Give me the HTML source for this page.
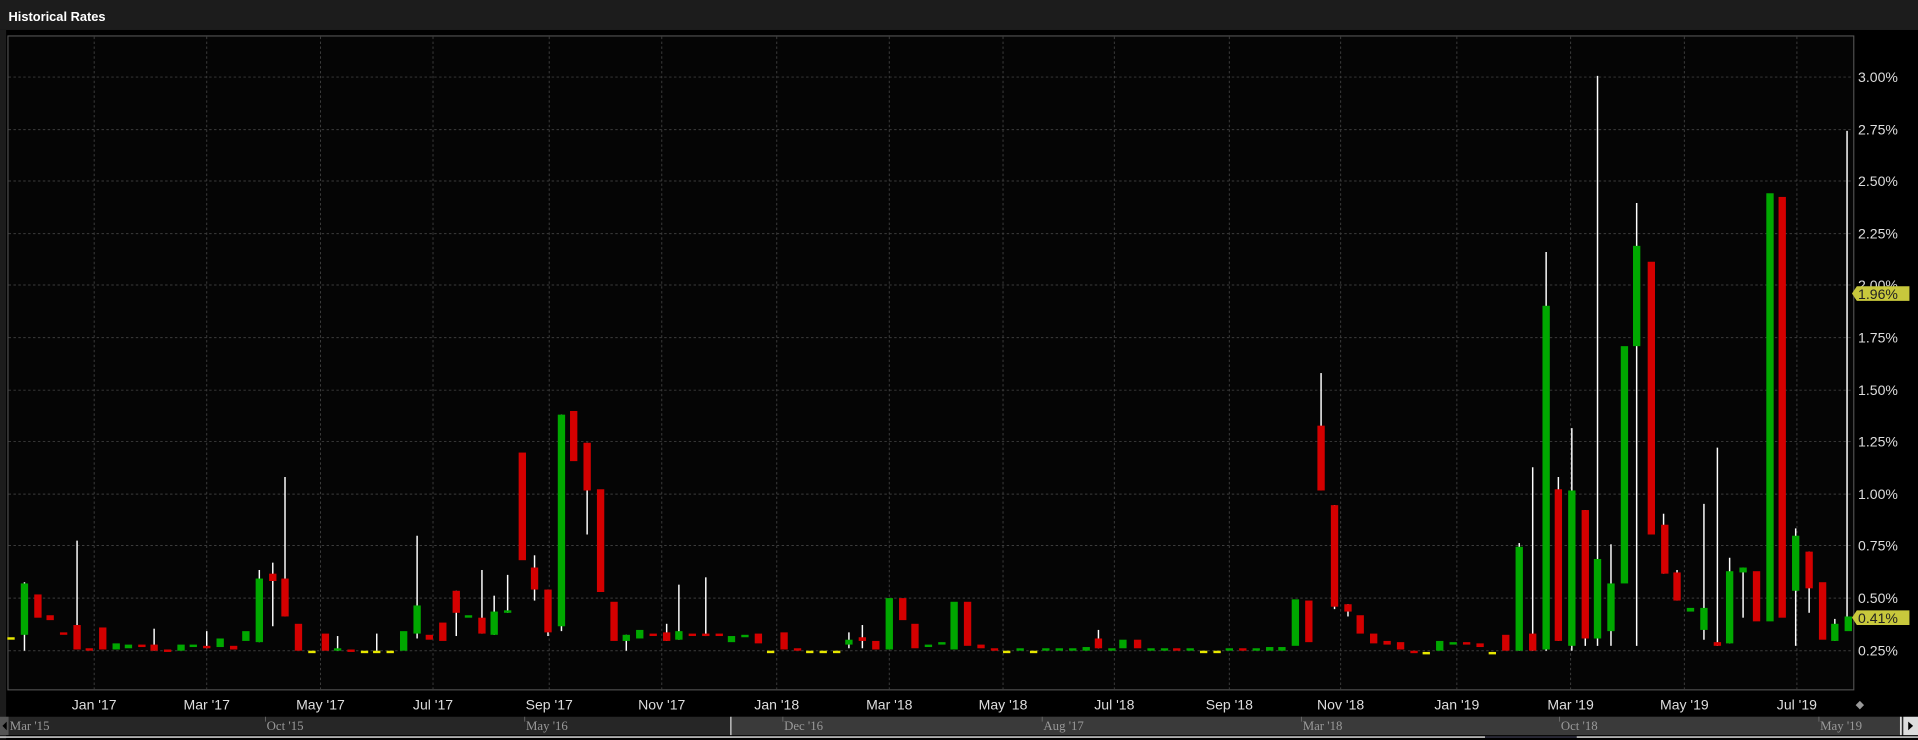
<!DOCTYPE html>
<html><head><meta charset="utf-8"><style>
html,body{margin:0;padding:0;background:#000;width:1918px;height:740px;overflow:hidden}
svg{display:block}
</style></head><body>
<svg width="1918" height="740" viewBox="0 0 1568 605" preserveAspectRatio="none" xmlns="http://www.w3.org/2000/svg">
<rect x="0" y="0" width="1568" height="605" fill="#000"/>
<rect x="0" y="0" width="1568" height="24.5" fill="#1c1c1c"/>
<rect x="0" y="24.5" width="5" height="580" fill="#1c1c1c"/>
<text x="7" y="17" fill="#fff" font-family="Liberation Sans, sans-serif" font-weight="bold" font-size="10.5">Historical Rates</text>
<rect x="6.5" y="29.4" width="1509" height="534.6" fill="#050505" stroke="#555" stroke-width="0.9"/>
<g stroke="#3c3c3c" stroke-width="0.8" stroke-dasharray="2,2">
<line x1="7" x2="1515" y1="63" y2="63"/><line x1="7" x2="1515" y1="106" y2="106"/><line x1="7" x2="1515" y1="148" y2="148"/><line x1="7" x2="1515" y1="191" y2="191"/><line x1="7" x2="1515" y1="233" y2="233"/><line x1="7" x2="1515" y1="276" y2="276"/><line x1="7" x2="1515" y1="319" y2="319"/><line x1="7" x2="1515" y1="361" y2="361"/><line x1="7" x2="1515" y1="404" y2="404"/><line x1="7" x2="1515" y1="446" y2="446"/><line x1="7" x2="1515" y1="489" y2="489"/><line x1="7" x2="1515" y1="532" y2="532"/>
<line y1="30" y2="564" x1="77" x2="77"/><line y1="30" y2="564" x1="169" x2="169"/><line y1="30" y2="564" x1="262" x2="262"/><line y1="30" y2="564" x1="354" x2="354"/><line y1="30" y2="564" x1="449" x2="449"/><line y1="30" y2="564" x1="541" x2="541"/><line y1="30" y2="564" x1="635" x2="635"/><line y1="30" y2="564" x1="727" x2="727"/><line y1="30" y2="564" x1="820" x2="820"/><line y1="30" y2="564" x1="911" x2="911"/><line y1="30" y2="564" x1="1005" x2="1005"/><line y1="30" y2="564" x1="1096" x2="1096"/><line y1="30" y2="564" x1="1191" x2="1191"/><line y1="30" y2="564" x1="1284" x2="1284"/><line y1="30" y2="564" x1="1377" x2="1377"/><line y1="30" y2="564" x1="1469" x2="1469"/>
</g>
<g fill="#ddd" font-family="Liberation Sans, sans-serif" font-size="11.5">
<text x="1519" y="67">3.00%</text><text x="1519" y="110">2.75%</text><text x="1519" y="152">2.50%</text><text x="1519" y="195">2.25%</text><text x="1519" y="237">2.00%</text><text x="1519" y="280">1.75%</text><text x="1519" y="323">1.50%</text><text x="1519" y="365">1.25%</text><text x="1519" y="408">1.00%</text><text x="1519" y="450">0.75%</text><text x="1519" y="493">0.50%</text><text x="1519" y="536">0.25%</text>
</g>
<g fill="#ddd" font-family="Liberation Sans, sans-serif" font-size="11.5" text-anchor="middle">
<text x="77" y="580">Jan '17</text><text x="169" y="580">Mar '17</text><text x="262" y="580">May '17</text><text x="354" y="580">Jul '17</text><text x="449" y="580">Sep '17</text><text x="541" y="580">Nov '17</text><text x="635" y="580">Jan '18</text><text x="727" y="580">Mar '18</text><text x="820" y="580">May '18</text><text x="911" y="580">Jul '18</text><text x="1005" y="580">Sep '18</text><text x="1096" y="580">Nov '18</text><text x="1191" y="580">Jan '19</text><text x="1284" y="580">Mar '19</text><text x="1377" y="580">May '19</text><text x="1469" y="580">Jul '19</text>
</g>
<text x="1517" y="579" fill="#999" font-size="9" font-family="DejaVu Sans, sans-serif">◆</text>
<g stroke="#fff" stroke-width="1.2">
<line x1="20" x2="20" y1="476" y2="532"/><line x1="63" x2="63" y1="442" y2="531"/><line x1="126" x2="126" y1="514" y2="532"/><line x1="169" x2="169" y1="516" y2="530"/><line x1="212" x2="212" y1="466" y2="525"/><line x1="223" x2="223" y1="460" y2="512"/><line x1="233" x2="233" y1="390" y2="504"/><line x1="276" x2="276" y1="520" y2="532"/><line x1="308" x2="308" y1="518" y2="532"/><line x1="341" x2="341" y1="438" y2="522"/><line x1="373" x2="373" y1="483" y2="520"/><line x1="394" x2="394" y1="466" y2="518"/><line x1="404" x2="404" y1="487" y2="519"/><line x1="415" x2="415" y1="470" y2="501"/><line x1="437" x2="437" y1="454" y2="491"/><line x1="448" x2="448" y1="482" y2="520"/><line x1="459" x2="459" y1="339" y2="516"/><line x1="480" x2="480" y1="362" y2="437"/><line x1="512" x2="512" y1="519" y2="532"/><line x1="545" x2="545" y1="510" y2="524"/><line x1="555" x2="555" y1="478" y2="523"/><line x1="577" x2="577" y1="472" y2="520"/><line x1="694" x2="694" y1="517" y2="530"/><line x1="705" x2="705" y1="511" y2="530"/><line x1="898" x2="898" y1="515" y2="530"/><line x1="1080" x2="1080" y1="305" y2="401"/><line x1="1091" x2="1091" y1="413" y2="498"/><line x1="1102" x2="1102" y1="494" y2="504"/><line x1="1242" x2="1242" y1="444" y2="532"/><line x1="1253" x2="1253" y1="382" y2="532"/><line x1="1264" x2="1264" y1="206" y2="532"/><line x1="1274" x2="1274" y1="390" y2="524"/><line x1="1285" x2="1285" y1="350" y2="532"/><line x1="1296" x2="1296" y1="417" y2="528"/><line x1="1306" x2="1306" y1="62" y2="528"/><line x1="1317" x2="1317" y1="445" y2="528"/><line x1="1338" x2="1338" y1="166" y2="528"/><line x1="1360" x2="1360" y1="420" y2="469"/><line x1="1371" x2="1371" y1="466" y2="491"/><line x1="1393" x2="1393" y1="412" y2="523"/><line x1="1404" x2="1404" y1="366" y2="528"/><line x1="1414" x2="1414" y1="456" y2="526"/><line x1="1425" x2="1425" y1="464" y2="505"/><line x1="1468" x2="1468" y1="432" y2="528"/><line x1="1479" x2="1479" y1="451" y2="501"/><line x1="1500" x2="1500" y1="506" y2="524"/><line x1="1510" x2="1510" y1="107" y2="510"/>
</g>
<g fill="#00a800">
<rect x="17" y="477" width="6" height="42"/><rect x="92" y="526" width="6" height="5"/><rect x="102" y="527" width="6" height="3"/><rect x="145" y="527" width="6" height="5"/><rect x="155" y="527" width="6" height="2"/><rect x="177" y="522" width="6" height="7"/><rect x="198" y="516" width="6" height="8"/><rect x="209" y="473" width="6" height="52"/><rect x="273" y="530" width="6" height="2"/><rect x="327" y="516" width="6" height="16"/><rect x="338" y="495" width="6" height="23"/><rect x="380" y="503" width="6" height="2"/><rect x="401" y="500" width="6" height="19"/><rect x="412" y="499" width="6" height="2"/><rect x="456" y="339" width="6" height="173"/><rect x="509" y="519" width="6" height="5"/><rect x="520" y="515" width="6" height="7"/><rect x="552" y="516" width="6" height="7"/><rect x="595" y="520" width="6" height="5"/><rect x="606" y="519" width="6" height="2"/><rect x="691" y="523" width="6" height="4"/><rect x="724" y="489" width="6" height="42"/><rect x="756" y="527" width="6" height="2"/><rect x="767" y="525" width="6" height="2"/><rect x="777" y="492" width="6" height="39"/><rect x="831" y="530" width="6" height="2"/><rect x="852" y="530" width="6" height="2"/><rect x="863" y="530" width="6" height="2"/><rect x="874" y="530" width="6" height="2"/><rect x="885" y="529" width="6" height="3"/><rect x="906" y="530" width="6" height="2"/><rect x="915" y="523" width="6" height="7"/><rect x="938" y="530" width="6" height="2"/><rect x="949" y="530" width="6" height="2"/><rect x="970" y="530" width="6" height="2"/><rect x="1002" y="530" width="6" height="2"/><rect x="1024" y="530" width="6" height="2"/><rect x="1035" y="529" width="6" height="3"/><rect x="1045" y="529" width="6" height="3"/><rect x="1056" y="490" width="6" height="38"/><rect x="1174" y="524" width="6" height="8"/><rect x="1185" y="525" width="6" height="2"/><rect x="1239" y="447" width="6" height="85"/><rect x="1261" y="250" width="6" height="281"/><rect x="1282" y="401" width="6" height="127"/><rect x="1303" y="457" width="6" height="65"/><rect x="1314" y="477" width="6" height="39"/><rect x="1325" y="283" width="6" height="194"/><rect x="1335" y="201" width="6" height="82"/><rect x="1379" y="497" width="6" height="3"/><rect x="1390" y="497" width="6" height="18"/><rect x="1411" y="467" width="6" height="59"/><rect x="1422" y="464" width="6" height="4"/><rect x="1444" y="158" width="6" height="350"/><rect x="1465" y="438" width="6" height="45"/><rect x="1497" y="510" width="6" height="14"/><rect x="1508" y="504" width="6" height="12"/>
</g>
<g fill="#d40000">
<rect x="28" y="486" width="6" height="19"/><rect x="38" y="503" width="6" height="4"/><rect x="49" y="517" width="6" height="2"/><rect x="60" y="511" width="6" height="20"/><rect x="70" y="530" width="6" height="2"/><rect x="81" y="513" width="6" height="18"/><rect x="113" y="527" width="6" height="2"/><rect x="123" y="527" width="6" height="5"/><rect x="134" y="531" width="6" height="2"/><rect x="166" y="528" width="6" height="2"/><rect x="188" y="528" width="6" height="3"/><rect x="220" y="469" width="6" height="6"/><rect x="230" y="473" width="6" height="31"/><rect x="241" y="510" width="6" height="22"/><rect x="263" y="518" width="6" height="14"/><rect x="284" y="531" width="6" height="2"/><rect x="348" y="519" width="6" height="4"/><rect x="359" y="509" width="6" height="15"/><rect x="370" y="483" width="6" height="18"/><rect x="391" y="505" width="6" height="13"/><rect x="424" y="370" width="6" height="88"/><rect x="434" y="464" width="6" height="18"/><rect x="445" y="482" width="6" height="35"/><rect x="466" y="336" width="6" height="41"/><rect x="477" y="362" width="6" height="39"/><rect x="488" y="400" width="6" height="84"/><rect x="499" y="492" width="6" height="32"/><rect x="531" y="518" width="6" height="2"/><rect x="542" y="517" width="6" height="7"/><rect x="563" y="518" width="6" height="2"/><rect x="574" y="518" width="6" height="2"/><rect x="585" y="518" width="6" height="2"/><rect x="617" y="518" width="6" height="8"/><rect x="638" y="517" width="6" height="14"/><rect x="649" y="530" width="6" height="2"/><rect x="702" y="521" width="6" height="3"/><rect x="713" y="524" width="6" height="7"/><rect x="735" y="489" width="6" height="18"/><rect x="745" y="510" width="6" height="20"/><rect x="788" y="492" width="6" height="36"/><rect x="799" y="527" width="6" height="3"/><rect x="810" y="530" width="6" height="2"/><rect x="895" y="522" width="6" height="8"/><rect x="927" y="523" width="6" height="7"/><rect x="959" y="530" width="6" height="2"/><rect x="1013" y="530" width="6" height="2"/><rect x="1067" y="491" width="6" height="34"/><rect x="1077" y="348" width="6" height="53"/><rect x="1088" y="413" width="6" height="83"/><rect x="1099" y="494" width="6" height="6"/><rect x="1109" y="503" width="6" height="15"/><rect x="1120" y="518" width="6" height="8"/><rect x="1131" y="524" width="6" height="3"/><rect x="1142" y="525" width="6" height="6"/><rect x="1153" y="532" width="6" height="2"/><rect x="1196" y="525" width="6" height="2"/><rect x="1207" y="526" width="6" height="3"/><rect x="1228" y="519" width="6" height="13"/><rect x="1250" y="518" width="6" height="14"/><rect x="1271" y="400" width="6" height="124"/><rect x="1293" y="417" width="6" height="105"/><rect x="1347" y="214" width="6" height="223"/><rect x="1358" y="429" width="6" height="40"/><rect x="1368" y="468" width="6" height="23"/><rect x="1401" y="525" width="6" height="3"/><rect x="1433" y="467" width="6" height="41"/><rect x="1454" y="161" width="6" height="344"/><rect x="1476" y="451" width="6" height="30"/><rect x="1487" y="476" width="6" height="47"/>
</g>
<g fill="#e8e800">
<rect x="6" y="521" width="6" height="2"/><rect x="252" y="532" width="6" height="2"/><rect x="295" y="532" width="6" height="2"/><rect x="305" y="532" width="6" height="2"/><rect x="316" y="532" width="6" height="2"/><rect x="627" y="532" width="6" height="2"/><rect x="659" y="532" width="6" height="2"/><rect x="670" y="532" width="6" height="2"/><rect x="681" y="532" width="6" height="2"/><rect x="820" y="532" width="6" height="2"/><rect x="842" y="532" width="6" height="2"/><rect x="981" y="532" width="6" height="2"/><rect x="992" y="532" width="6" height="2"/><rect x="1163" y="533" width="6" height="2"/><rect x="1217" y="533" width="6" height="2"/>
</g>
<path d="M1514 240 L1518 234 H1561 V246 H1518 Z" fill="#c8c83c"/>
<text x="1519" y="244.5" fill="#222" font-family="Liberation Sans, sans-serif" font-size="11.5">1.96%</text>
<path d="M1514 505 L1518 499 H1561 V511 H1518 Z" fill="#c8c83c"/>
<text x="1519" y="509.5" fill="#222" font-family="Liberation Sans, sans-serif" font-size="11.5">0.41%</text>
<rect x="0" y="586" width="1568" height="15" fill="#262626"/>
<rect x="597" y="586" width="957" height="15" fill="#3a3a3a"/>
<rect x="0" y="586" width="7" height="15" fill="#555"/>
<path d="M2 593.5 L5.5 590 V597 Z" fill="#000"/>
<line x1="597.5" x2="597.5" y1="586" y2="601" stroke="#ddd" stroke-width="1"/>
<line x1="1554" x2="1554" y1="586" y2="601" stroke="#ddd" stroke-width="1.5"/>
<rect x="1556" y="586" width="12" height="15" fill="#ddd"/>
<path d="M1560 590 L1564 593.5 L1560 597 Z" fill="#000"/>
<g fill="#999" font-family="Liberation Serif, serif" font-size="10.5">
<text x="8" y="597">Mar '15</text><text x="218" y="597">Oct '15</text><text x="430" y="597">May '16</text><text x="641" y="597">Dec '16</text><text x="853" y="597">Aug '17</text><text x="1065" y="597">Mar '18</text><text x="1276" y="597">Oct '18</text><text x="1488" y="597">May '19</text>
</g>
<g stroke="#777" stroke-width="0.6">
<line x1="217" x2="217" y1="586" y2="590"/><line x1="429" x2="429" y1="586" y2="590"/><line x1="640" x2="640" y1="586" y2="590"/><line x1="852" x2="852" y1="586" y2="590"/><line x1="1064" x2="1064" y1="586" y2="590"/><line x1="1275" x2="1275" y1="586" y2="590"/><line x1="1487" x2="1487" y1="586" y2="590"/>
</g>
<rect x="0" y="602" width="1568" height="1.2" fill="#ddd"/>
<rect x="1214" y="602" width="75" height="1.2" fill="#112"/>
</svg>
</body></html>
